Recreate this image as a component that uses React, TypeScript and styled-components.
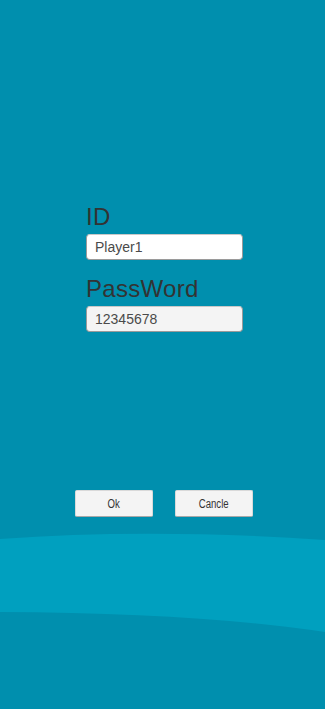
import React from "react";
import styled, { createGlobalStyle } from "styled-components";

const Global = createGlobalStyle`
  html, body { margin: 0; padding: 0; background: #008fae; }
  #root { width: 325px; height: 709px; }
`;

const Screen = styled.div`
  position: relative;
  width: 325px;
  height: 709px;
  overflow: hidden;
  background: #008fae;
  font-family: "Liberation Sans", Arial, sans-serif;
`;

const Wave = styled.svg`
  position: absolute;
  left: 0;
  top: 0;
  width: 325px;
  height: 709px;
  pointer-events: none;
`;

const Content = styled.div`
  position: relative;
  display: flex;
  flex-direction: column;
  height: 100%;
`;

const Form = styled.div`
  display: flex;
  flex-direction: column;
  padding: 203px 0 0 86px;
  width: 157px;
`;

const Label = styled.div`
  font-size: 24px;
  line-height: 28px;
  color: #333333;
  margin-bottom: 3px;
  letter-spacing: 0.3px;
`;

const Field = styled.div<{ $filled?: boolean }>`
  box-sizing: border-box;
  height: 26px;
  width: 157px;
  border-radius: 4px;
  background: ${(p) => (p.$filled ? "#f4f4f4" : "#ffffff")};
  border: 1px solid #9a9a9a;
  border-top-color: #c8c8c8;
  display: flex;
  align-items: center;
  padding-left: 8px;
  font-size: 14px;
  color: #4a4a4a;
  margin-bottom: ${(p) => (p.$filled ? 0 : 15)}px;
`;

const Buttons = styled.div`
  display: flex;
  gap: 22px;
  padding: 158px 0 0 75px;
`;

const Button = styled.div`
  box-sizing: border-box;
  width: 78px;
  height: 27px;
  border-radius: 2px;
  background: #f4f4f4;
  border: 1px solid #d9d9d9;
  border-bottom-color: #a8a8a8;
  display: flex;
  align-items: center;
  justify-content: center;
  font-family: "Liberation Sans Narrow", "Liberation Sans", Arial, sans-serif;
  font-stretch: condensed;
  font-size: 12px;
  color: #333333;
`;

const NarrowText = styled.span`
  display: inline-block;
  transform: scaleX(0.8);
`;

export default function App() {
  return (
    <>
      <Global />
      <Screen>
        <Wave viewBox="0 0 325 709">
          <path
            d="M0 539 Q150 528 325 540 L325 632 Q200 613 0 612 Z"
            fill="#00a0bf"
          />
        </Wave>
        <Content>
          <Form>
            <Label>ID</Label>
            <Field>Player1</Field>
            <Label>PassWord</Label>
            <Field $filled>12345678</Field>
          </Form>
          <Buttons>
            <Button>
              <NarrowText>Ok</NarrowText>
            </Button>
            <Button>
              <NarrowText>Cancle</NarrowText>
            </Button>
          </Buttons>
        </Content>
      </Screen>
    </>
  );
}
